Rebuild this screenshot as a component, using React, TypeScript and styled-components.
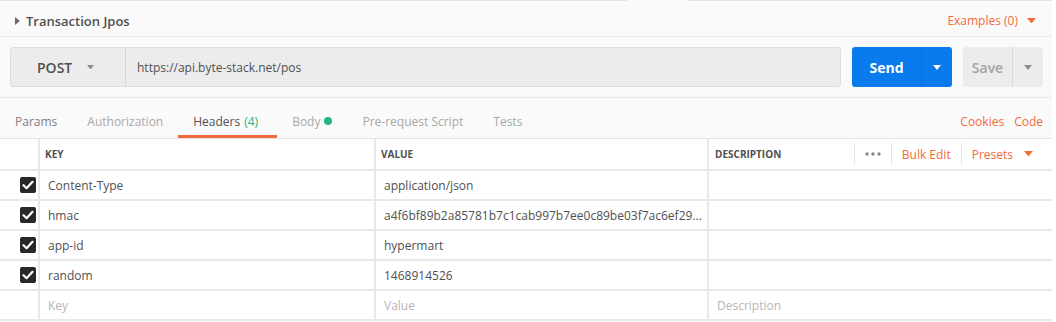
import React from 'react';
import styled, { createGlobalStyle } from 'styled-components';

const GlobalStyle = createGlobalStyle`
  body {
    margin: 0;
    background: #ffffff;
    font-family: "Open Sans", "Liberation Sans", sans-serif;
  }
`;

const orange = '#f26b3a';
const green = '#26b47f';
const text = '#505050';

const Panel = styled.div`
  width: 1052px;
  height: 322px;
  background: #fafafa;
  display: flex;
  flex-direction: column;
  overflow: hidden;
`;

const TopEdge = styled.div`
  display: flex;
  height: 1px;
  flex-shrink: 0;
`;

const EdgePart = styled.div<{ $w?: number; $gap?: boolean }>`
  width: ${p => (p.$w ? `${p.$w}px` : 'auto')};
  flex: ${p => (p.$w ? '0 0 auto' : '1')};
  background: ${p => (p.$gap ? '#fafafa' : '#e3e3e3')};
`;

const TitleBar = styled.div`
  height: 36px;
  flex-shrink: 0;
  display: flex;
  align-items: center;
  padding: 4px 16px 0 15px;
  box-sizing: border-box;
  border-bottom: 1px solid #e8e8e8;
`;

const Title = styled.div`
  display: flex;
  align-items: center;
  gap: 6px;
  font-size: 13px;
  font-weight: 600;
  color: ${text};
  flex: 1;
`;

const Examples = styled.div`
  display: flex;
  align-items: center;
  gap: 9px;
  font-size: 12px;
  color: ${orange};
`;

const UrlRow = styled.div`
  height: 61px;
  flex-shrink: 0;
  display: flex;
  align-items: center;
  padding: 0 9px 0 10px;
  gap: 11px;
  border-bottom: 1px solid #e8e8e8;
  box-sizing: border-box;
`;

const UrlBox = styled.div`
  flex: 1;
  height: 40px;
  display: flex;
  background: #ececec;
  border: 1px solid #dcdcdc;
  border-radius: 3px;
  box-sizing: border-box;
`;

const Method = styled.div`
  width: 115px;
  display: flex;
  align-items: center;
  gap: 15px;
  padding-left: 26px;
  box-sizing: border-box;
  border-right: 1px solid #d6d6d6;
  font-size: 14px;
  font-weight: 600;
  color: ${text};
`;

const UrlText = styled.div`
  display: flex;
  align-items: center;
  padding-left: 11px;
  font-size: 12px;
  color: ${text};
`;

const SplitButton = styled.div<{ $primary?: boolean }>`
  height: 40px;
  display: flex;
  border-radius: 3px;
  overflow: hidden;
  background: ${p => (p.$primary ? '#097bed' : '#ececec')};
  color: ${p => (p.$primary ? '#ffffff' : '#a3a3a3')};
  font-size: 14px;
  font-weight: ${p => (p.$primary ? 700 : 600)};
`;

const ButtonMain = styled.div<{ $w: number }>`
  width: ${p => p.$w}px;
  display: flex;
  align-items: center;
  justify-content: center;
`;

const ButtonCaret = styled.div<{ $primary?: boolean }>`
  width: 30px;
  display: flex;
  align-items: center;
  justify-content: center;
  border-left: 1px solid ${p => (p.$primary ? '#0a6fd6' : '#d9d9d9')};
`;

const TabRow = styled.div`
  height: 41px;
  flex-shrink: 0;
  display: flex;
  align-items: stretch;
  border-bottom: 1px solid #e3e3e3;
  padding-right: 9px;
  box-sizing: border-box;
`;

const Tab = styled.div<{ $active?: boolean; $tone?: string }>`
  display: flex;
  align-items: center;
  gap: 4px;
  padding: 9px ${p => (p.$active ? '19px' : '15px')} 0 15px;
  font-size: 12px;
  color: ${p => p.$tone || '#a8a8a8'};
  border-bottom: 3px solid ${p => (p.$active ? orange : 'transparent')};
  box-sizing: border-box;
`;

const Count = styled.span`
  color: ${green};
`;

const Dot = styled.span`
  width: 8px;
  height: 8px;
  border-radius: 50%;
  background: ${green};
  display: inline-block;
`;

const Spacer = styled.div`
  flex: 1;
`;

const Link = styled.div`
  display: flex;
  align-items: center;
  padding: 9px 0 3px 10px;
  font-size: 12px;
  color: ${orange};
`;

const Table = styled.div`
  display: grid;
  grid-template-columns: 38px 334px 331px 1fr;
  grid-auto-rows: 28px;
  grid-template-rows: 30px;
  gap: 2px;
  background: #e8e8e8;
  padding-bottom: 2px;
`;

const HeadCell = styled.div`
  background: #ffffff;
  display: flex;
  align-items: center;
  padding-left: 5px;
  font-size: 10px;
  font-weight: 700;
  color: ${text};
`;

const HeadLabel = styled.div`
  flex: 1;
  padding-left: 1px;
`;

const HeadAction = styled.div<{ $last?: boolean }>`
  display: flex;
  align-items: center;
  gap: 11px;
  height: 22px;
  padding: 0 ${p => (p.$last ? '19px' : '10px')} 0 10px;
  border-left: 1px solid #e6e6e6;
  font-size: 12px;
  font-weight: 400;
  color: ${orange};
`;

const Cell = styled.div<{ $placeholder?: boolean }>`
  background: #ffffff;
  display: flex;
  align-items: center;
  padding: 0 4px 0 8px;
  font-size: 12px;
  color: ${p => (p.$placeholder ? '#b5b5b5' : text)};
  min-width: 0;
  white-space: nowrap;
`;

const CheckCell = styled.div`
  background: #ffffff;
  display: flex;
  align-items: center;
  justify-content: flex-end;
  padding-right: 2px;
`;

const Check = styled.div`
  width: 16px;
  height: 16px;
  border-radius: 2px;
  background: #282828;
  display: flex;
  align-items: center;
  justify-content: center;
`;

const Caret = ({ color, size = 8 }: { color: string; size?: number }) => (
  <svg width={size} height={size / 2 + 1} viewBox="0 0 8 5">
    <path d="M0 0 L8 0 L4 5 Z" fill={color} />
  </svg>
);

const RightCaret = () => (
  <svg width="5" height="8" viewBox="0 0 5 8">
    <path d="M0 0 L5 4 L0 8 Z" fill="#6b6b6b" />
  </svg>
);

const CheckMark = () => (
  <svg width="12" height="10" viewBox="0 0 12 10">
    <path d="M1.5 5.2 L4.6 8.2 L10.5 1.8" stroke="#ffffff" strokeWidth="2.2" fill="none" strokeLinecap="round" strokeLinejoin="round" />
  </svg>
);

const Dots = () => (
  <svg width="16" height="4" viewBox="0 0 16 4">
    <circle cx="2" cy="2" r="1.7" fill="#8a8a8a" />
    <circle cx="8" cy="2" r="1.7" fill="#8a8a8a" />
    <circle cx="14" cy="2" r="1.7" fill="#8a8a8a" />
  </svg>
);

const headers = [
  { key: 'Content-Type', value: 'application/json' },
  { key: 'hmac', value: 'a4f6bf89b2a85781b7c1cab997b7ee0c89be03f7ac6ef29...' },
  { key: 'app-id', value: 'hypermart' },
  { key: 'random', value: '1468914526' },
];

export default function App() {
  return (
    <Panel>
      <GlobalStyle />
      <TopEdge>
        <EdgePart $w={627} />
        <EdgePart $w={61} $gap />
        <EdgePart />
      </TopEdge>
      <TitleBar>
        <Title>
          <RightCaret />
          Transaction Jpos
        </Title>
        <Examples>
          Examples (0)
          <Caret color={orange} size={9} />
        </Examples>
      </TitleBar>
      <UrlRow>
        <UrlBox>
          <Method>
            POST
            <Caret color="#8c8c8c" size={7} />
          </Method>
          <UrlText>https://api.byte-stack.net/pos</UrlText>
        </UrlBox>
        <SplitButton $primary>
          <ButtonMain $w={69}>Send</ButtonMain>
          <ButtonCaret $primary>
            <Caret color="#ffffff" size={8} />
          </ButtonCaret>
        </SplitButton>
        <SplitButton>
          <ButtonMain $w={49}>Save</ButtonMain>
          <ButtonCaret>
            <Caret color="#8c8c8c" size={8} />
          </ButtonCaret>
        </SplitButton>
      </UrlRow>
      <TabRow>
        <Tab $tone="#808080">Params</Tab>
        <Tab>Authorization</Tab>
        <Tab $active $tone={text}>
          Headers <Count>(4)</Count>
        </Tab>
        <Tab>
          Body <Dot />
        </Tab>
        <Tab>Pre-request Script</Tab>
        <Tab>Tests</Tab>
        <Spacer />
        <Link>Cookies</Link>
        <Link>Code</Link>
      </TabRow>
      <Table>
        <HeadCell />
        <HeadCell>KEY</HeadCell>
        <HeadCell>VALUE</HeadCell>
        <HeadCell>
          <HeadLabel>DESCRIPTION</HeadLabel>
          <HeadAction>
            <Dots />
          </HeadAction>
          <HeadAction>Bulk Edit</HeadAction>
          <HeadAction $last>
            Presets
            <Caret color={orange} size={9} />
          </HeadAction>
        </HeadCell>
        {headers.map(h => (
          <React.Fragment key={h.key}>
            <CheckCell>
              <Check>
                <CheckMark />
              </Check>
            </CheckCell>
            <Cell>{h.key}</Cell>
            <Cell>{h.value}</Cell>
            <Cell />
          </React.Fragment>
        ))}
        <CheckCell />
        <Cell $placeholder>Key</Cell>
        <Cell $placeholder>Value</Cell>
        <Cell $placeholder>Description</Cell>
      </Table>
    </Panel>
  );
}
